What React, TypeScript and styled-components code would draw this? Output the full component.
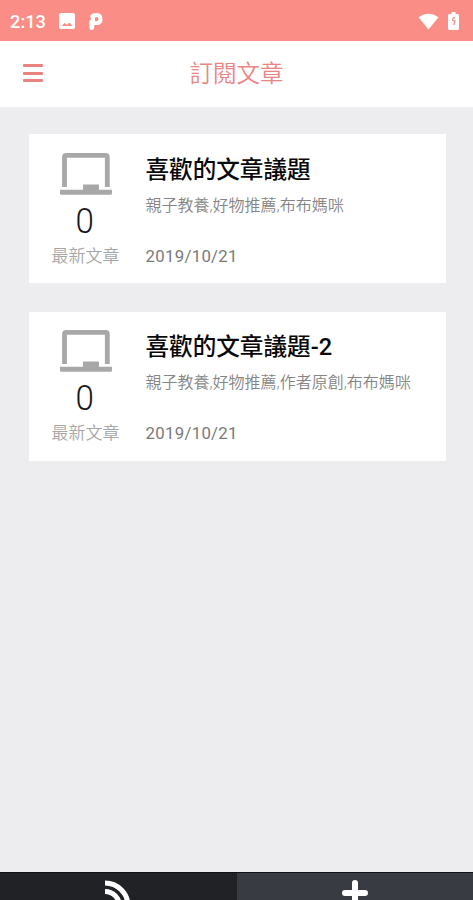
import React from "react";
import styled, { createGlobalStyle } from "styled-components";

const GlobalStyle = createGlobalStyle`
  * { box-sizing: border-box; }
  body {
    margin: 0;
    overflow: hidden;
    font-family: Roboto, "Noto Sans CJK TC", sans-serif;
  }
`;

const Screen = styled.div`
  display: flex;
  flex-direction: column;
  height: 100vh;
  overflow: hidden;
  background: #ededef;
`;

const StatusBar = styled.div`
  display: flex;
  justify-content: space-between;
  flex: none;
  height: 41px;
  padding: 0 14px 0 10px;
  background: #fa8d85;
  color: #fff;
`;

const StatusGroup = styled.div`
  display: flex;
  align-items: center;
  padding-top: 1px;
`;

const Clock = styled.span`
  width: 49px;
  padding-top: 1px;
  font-size: 18.3px;
  line-height: 22px;
  font-weight: 500;
  white-space: nowrap;
`;

const StatusIcon = styled.svg<{ $gap?: number }>`
  display: block;
  flex: none;
  margin-left: ${(p) => p.$gap ?? 0}px;
`;

const Header = styled.header`
  display: grid;
  grid-template-columns: 66px 1fr 66px;
  align-items: center;
  flex: none;
  height: 66px;
  background: #fff;
`;

const MenuButton = styled.button`
  display: flex;
  flex-direction: column;
  justify-content: space-between;
  width: 20px;
  height: 18px;
  margin: -2px 0 0 23px;
  padding: 0;
  border: 0;
  background: none;
`;

const MenuLine = styled.span`
  height: 3px;
  border-radius: 1px;
  background: #e8837f;
`;

const PageTitle = styled.h1`
  margin: 0;
  color: #ea8583;
  font-size: 23.5px;
  line-height: 32px;
  font-weight: 350;
  text-align: center;
  white-space: nowrap;
`;

const CardList = styled.main`
  display: flex;
  flex-direction: column;
  flex: 1;
  gap: 28.4px;
  padding: 27.3px 27.5px 0 28.5px;
`;

const Card = styled.article`
  display: grid;
  grid-template-columns: 117px 1fr;
  height: 149px;
  background: #fff;
`;

const Summary = styled.div`
  display: flex;
  flex-direction: column;
  align-items: center;
  width: 114px;
  padding-top: 18.4px;
`;

const Count = styled.span`
  margin: 5px 0 0 -2px;
  color: #17171b;
  font-size: 34.5px;
  line-height: 40px;
  font-weight: 300;
  transform: scaleX(0.96);
`;

const CountLabel = styled.span`
  margin-top: 3px;
  color: #a6a6a6;
  font-size: 17px;
  line-height: 24px;
  font-weight: 350;
`;

const Details = styled.div`
  display: flex;
  flex-direction: column;
  min-width: 0;
  white-space: nowrap;
`;

const Topic = styled.h2`
  margin: 18.4px 0 0;
  color: #08080a;
  font-size: 23.6px;
  line-height: 34px;
  font-weight: 500;
`;

const Tags = styled.p`
  margin: 7px 0 0;
  color: #858585;
  font-size: 16px;
  line-height: 24px;
  font-weight: 350;
`;

const PublishDate = styled.time`
  margin-top: 26px;
  color: #7a7a7a;
  font-size: 16.8px;
  line-height: 24px;
  font-weight: 400;
  letter-spacing: 0.3px;
`;

const TabBar = styled.nav`
  display: grid;
  grid-template-columns: 1fr 1fr;
  flex: none;
  height: 28px;
  border-top: 1px solid #111215;
  overflow: hidden;
`;

const Tab = styled.button<{ $tone: string }>`
  display: flex;
  justify-content: center;
  align-items: flex-start;
  padding: 6px 0 0;
  border: 0;
  background: ${(p) => p.$tone};
`;

const LaptopIcon = () => (
  <svg width="52" height="43" viewBox="0 0 52 43" fill="none">
    <path d="M4.500 34V4Q4.500 2.400 6.500 2.400H45.500Q47.300 2.400 47.300 4V34" stroke="#a8a8a8" strokeWidth="4.800" />
    <path d="M0 36.800H23V31.600H39V36.800H52V40.600Q52 41.800 50.500 41.800H1.500Q0 41.800 0 40.600Z" fill="#a8a8a8" />
  </svg>
);

const articles = [
  { topic: "喜歡的文章議題", tags: "親子教養,好物推薦,布布媽咪", date: "2019/10/21", count: 0 },
  { topic: "喜歡的文章議題-2", tags: "親子教養,好物推薦,作者原創,布布媽咪", date: "2019/10/21", count: 0 },
];

export default function App() {
  return (
    <Screen>
      <GlobalStyle />
      <StatusBar>
        <StatusGroup>
          <Clock>2:13</Clock>
          <StatusIcon width="16" height="16" viewBox="0 0 16 16" fill="#fff">
            <path fillRule="evenodd" d="M2 0H14Q16 0 16 2V14Q16 16 14 16H2Q0 16 0 14V2Q0 0 2 0ZM2.500 13H13.500L10.500 9.500L8 11.800L5.500 10Z" />
          </StatusIcon>
          <StatusIcon $gap={14} width="14" height="17" viewBox="0 0 14 17" fill="#fff">
            <path fillRule="evenodd" d="M1 3Q2.500 0 7.500 0Q13.500 0 13.500 6Q13.500 12 7.500 12H5.300V14.500Q5 17 2.700 17Q0.300 17 0.300 14.500V8Q2 7 2 5.500ZM7.500 4Q6 4 6 5V8.300H7.500Q9.500 8.300 9.500 6Q9.500 4 7.500 4Z" />
          </StatusIcon>
        </StatusGroup>
        <StatusGroup>
          <StatusIcon width="21" height="17" viewBox="0 0 22 17" fill="#fff">
            <path d="M0.500 4Q11-3.300 21.500 4L11 17Z" />
          </StatusIcon>
          <StatusIcon $gap={9} width="11" height="18" viewBox="0 0 11 18">
            <path fill="#fff" d="M3.500 0H7.500V2H9.500Q11 2 11 3.500V16.500Q11 18 9.500 18H1.500Q0 18 0 16.500V3.500Q0 2 1.500 2H3.500Z" />
            <path fill="none" stroke="#fa8d85" strokeWidth="1.300" d="M7 5.500Q4.200 6 4.700 8.200L7 9L5.700 13" />
          </StatusIcon>
        </StatusGroup>
      </StatusBar>
      <Header>
        <MenuButton aria-label="選單">
          <MenuLine />
          <MenuLine />
          <MenuLine />
        </MenuButton>
        <PageTitle>訂閱文章</PageTitle>
      </Header>
      <CardList>
        {articles.map((a) => (
          <Card key={a.topic}>
            <Summary>
              <LaptopIcon />
              <Count>{a.count}</Count>
              <CountLabel>最新文章</CountLabel>
            </Summary>
            <Details>
              <Topic>{a.topic}</Topic>
              <Tags>{a.tags}</Tags>
              <PublishDate>{a.date}</PublishDate>
            </Details>
          </Card>
        ))}
      </CardList>
      <TabBar>
        <Tab $tone="#212226" aria-label="訂閱">
          <svg width="28" height="28" viewBox="0 0 28 28" fill="none" stroke="#fff" strokeWidth="5">
            <path d="M1 4A23 23 0 0 1 24 27M1 12.500A14.500 14.500 0 0 1 15.500 27" />
            <circle cx="4" cy="24" r="3" fill="#fff" stroke="none" />
          </svg>
        </Tab>
        <Tab $tone="#383b41" aria-label="新增">
          <svg width="28" height="28" viewBox="0 0 28 28" fill="none" stroke="#fff" strokeWidth="6" strokeLinecap="round">
            <path d="M14 4V24M4 14H24" />
          </svg>
        </Tab>
      </TabBar>
    </Screen>
  );
}
